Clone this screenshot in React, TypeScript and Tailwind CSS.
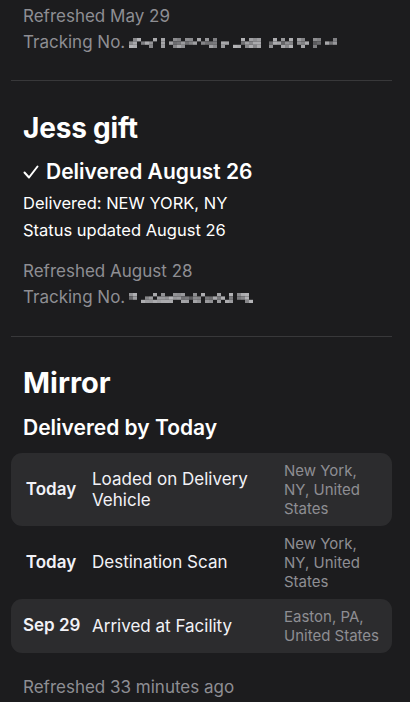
import * as React from "react";

const font = { fontFamily: "Inter, 'Liberation Sans', sans-serif" };

// pixelated tracking number: deterministic mosaic of gray cells
const Mosaic = ({ cols, seed }: { cols: number; seed: number }) => {
	let s = seed;
	const rand = () => {
		s = (s * 1103515245 + 12345) % 2147483648;
		return s / 2147483648;
	};
	const cells: React.ReactNode[] = [];
	for (let c = 0; c < cols; c++) {
		const gap = rand() < 0.3;
		for (let r = 0; r < 3; r++) {
			const v = rand();
			if (gap && v < 0.85) continue;
			if (r !== 1 && v < 0.4) continue;
			const g = Math.round(90 + v * 90);
			cells.push(
				<rect
					key={`${c}-${r}`}
					x={c * 4}
					y={r * 3.4}
					width={4}
					height={3.4}
					fill={`rgb(${g},${g},${g + 3})`}
				/>
			);
		}
	}
	return (
		<svg width={cols * 4} height={10} className="inline-block ml-[4px] mt-[1px] align-middle">
			{cells}
		</svg>
	);
};

const Tracking = ({ cols, seed }: { cols: number; seed: number }) => (
	<div className="flex items-center text-[17px] leading-[26px] text-[#8e8e93]">
		<span>Tracking No.</span>
		<Mosaic cols={cols} seed={seed} />
	</div>
);

const Divider = () => <div className="ml-[11px] mr-[18px] h-px bg-[#38383a]" />;

const events = [
	{ date: "Today", text: "Loaded on Delivery Vehicle", place: "New York, NY, United States", shaded: true },
	{ date: "Today", text: "Destination Scan", place: "New York, NY, United States", shaded: false },
	{ date: "Sep 29", text: "Arrived at Facility", place: "Easton, PA, United States", shaded: true },
];

export default function App() {
	return (
		<div className="w-[410px] h-[702px] overflow-hidden bg-[#1c1c1e] text-white" style={font}>
			<div className="px-[23px] pt-[3px] pb-[25px]">
				<div className="text-[17px] leading-[26px] text-[#8e8e93]">Refreshed May 29</div>
				<Tracking cols={53} seed={7} />
			</div>
			<Divider />

			<div className="px-[23px] pt-[30px] pb-[26px]">
				<h2 className="text-[28px] leading-[34px] font-bold tracking-[-0.2px]">Jess gift</h2>
				<div className="mt-[13px] flex items-center gap-[7px] text-[21px] leading-[28px] font-semibold">
					<svg width="16" height="14" viewBox="0 0 16 14" fill="none">
						<path d="M1.5 7.5 L6 12.5 L14.5 1.5" stroke="white" strokeWidth="2" strokeLinecap="round" strokeLinejoin="round" />
					</svg>
					<span>Delivered August 26</span>
				</div>
				<div className="mt-[4px] text-[16.5px] leading-[26px]">Delivered: NEW YORK, NY</div>
				<div className="mt-px text-[16.5px] leading-[26px]">Status updated August 26</div>
				<div className="mt-[15px] text-[17px] leading-[26px] text-[#8e8e93]">Refreshed August 28</div>
				<Tracking cols={31} seed={23} />
			</div>
			<Divider />

			<div className="pt-[28px]">
				<h2 className="px-[23px] text-[29px] leading-[36px] font-bold">Mirror</h2>
				<h3 className="mt-[13px] px-[23px] text-[21px] leading-[28px] font-semibold">Delivered by Today</h3>
				<div className="mt-[11px] ml-[11px] mr-[18px] flex flex-col">
					{events.map((e, i) => (
						<div
							key={i}
							className={`flex items-center py-[8px] pl-[12px] pr-[10px] rounded-[11px] ${e.shaded ? "bg-[#2c2c2e]" : ""}`}
						>
							<div className="w-[56px] shrink-0 whitespace-nowrap text-center text-[17px] font-semibold text-[#f2f2f7]">
								{e.date}
							</div>
							<div className="ml-[13px] flex-1 pr-[10px] text-[17px] leading-[21px] text-[#f2f2f7]">{e.text}</div>
							<div className="w-[98px] shrink-0 text-[15px] leading-[19px] text-[#8e8e93]">{e.place}</div>
						</div>
					))}
				</div>
				<div className="mt-[21px] px-[23px] text-[17px] leading-[26px] text-[#8e8e93]">Refreshed 33 minutes ago</div>
			</div>
		</div>
	);
}
